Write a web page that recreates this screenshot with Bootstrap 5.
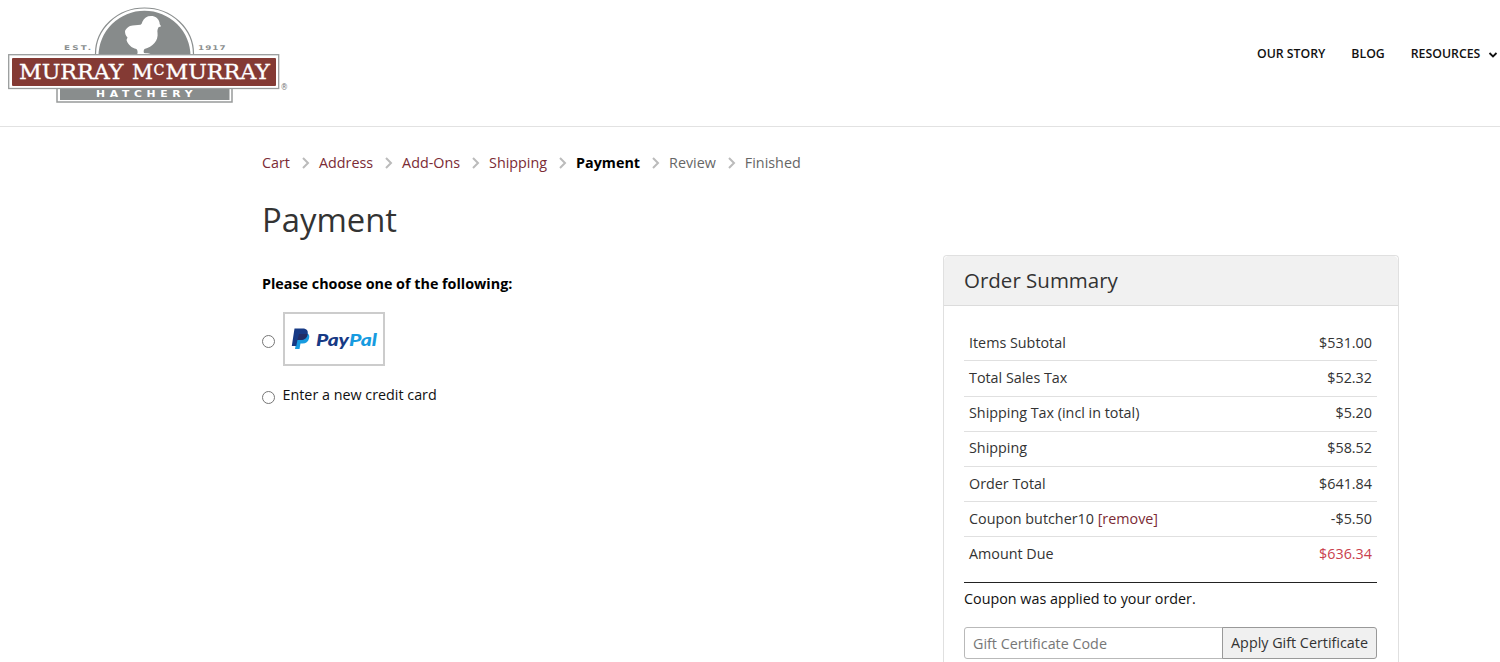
<!DOCTYPE html>
<html lang="en">
<head>
<meta charset="utf-8">
<meta name="viewport" content="width=device-width, initial-scale=1">
<title>Payment - Murray McMurray Hatchery</title>
<link rel="stylesheet" href="https://cdn.jsdelivr.net/npm/bootstrap@5.3.0/dist/css/bootstrap.min.css">
<style>
body{font-family:"Open Sans",sans-serif;font-size:14.33px;line-height:21px;color:#111;background:#fff}
.site-header{height:127px;border-bottom:1px solid #e2e2e2;padding:0 2px 0 8px}
.site-logo{margin-top:7px}
.site-menu{gap:26px;margin-top:43px;font-size:12.3px;font-weight:600;color:#111}
.site-menu a{color:#111;text-decoration:none}
.site-menu svg{margin-left:4.500px}
.checkout{width:1137px;margin-left:262px;padding-top:25px}
.steps{gap:12px;height:21px}
.steps a,.coupon a{color:#7b2b35;text-decoration:none}
.steps strong{color:#000}
.steps .later{color:#666}
.steps svg{margin-right:-3px}
h1{font-size:32.8px;line-height:40px;font-weight:400;color:#333;margin:27px 0 0}
.summary{width:456px;height:407px;margin-top:15px;border-color:#e0e0e0;border-bottom:0;border-radius:4px 4px 0 0}
.summary .card-header{height:50px;background:#f1f1f1;border-color:#dcdcdc;padding:0 20px}
.summary h2{font-size:20.5px;font-weight:400;color:#333;margin:0;line-height:49px}
.summary .card-body{padding:20px 21px 0 20px}
.totals{margin:0;color:#333}
.totals td{padding:6px 5px 7px;border-color:#e0e0e0;color:#333}
.totals tr:nth-child(2) td{padding-bottom:8px}
.totals tr:nth-child(3) td,.totals tr:nth-child(4) td{padding-top:5px;padding-bottom:8px}
.totals tr:last-child td{border:0}
.totals .due{color:#c9404d}
.note{border-top:1px solid #222;padding-top:5px;margin-top:11px}
.gift{margin-top:18px;height:32px}
.gift .form-control{font-size:14.33px;border-color:#b9b9b9;border-radius:3px;padding:1px 8px 0;color:#333}
.gift .form-control::placeholder{color:#777}
.gift .btn{font-size:14.33px;background:#f0f0f0;border:1px solid #999;border-radius:3px;padding:0;width:155px;color:#333}
.prompt{padding-top:33px;font-weight:700;color:#000}
.form-check-input.pick{width:13px;height:13px;border:1px solid #767676;margin:4px 0 0;flex:none}
.method-paypal{margin-top:18px}
.method-card{margin-top:18px}
.method-card span{padding:0 0 1px 7.500px}
.paypal{width:102px;height:54px;border:2px solid #ccc}
</style>
</head>
<body>
<header class="site-header d-flex justify-content-between align-items-start">
  <a href="#" class="site-logo" aria-label="Murray McMurray Hatchery">
    <svg class="d-block" width="282" height="98" viewBox="8 7 282 98">
      <path d="M95.5 56v-2a49 46 0 0 1 98 0v2" fill="#fff" stroke="#8b8f8f" stroke-width="1.2"/>
      <path d="M98.5 56a45.8 45 0 0 1 92 0z" fill="#878b8b"/>
      <path d="M136.500 55c1.500-1.500 1.500-4 0-6-5-1-8.500-4.500-10-9l1-2.500c-2-2-2.500-4-2.500-6.500 1-2 2.500-4 5-5 3.500-.8 7-.5 10.500-1.200 1.500-.8 1.500-2.300 2-3.300 1.500-3.500 4.500-5.500 8.500-5.500 4.500 0 7.500 2.500 8.500 6.500 0 1.500.5 2.500 1.700 3.700l-2.700 1c-1 2-1.300 3.300-1 5.300.5 4-.5 7.500-3 10.500-2.500 3-6 5-10 6-1 1.500-1 2.500-.5 4 2 .3 4.500 0 6.500 1v1z" fill="#fff"/>
      <path d="M57 88v14h175V88" fill="#fff" stroke="#989b9b" stroke-width="1.500"/>
      <rect x="60" y="88" width="169.500" height="12" fill="#898d8d"/>
      <rect x="8.700" y="54.700" width="270" height="33.800" fill="#fff" stroke="#999c9c" stroke-width="1.300"/>
      <rect x="12" y="58" width="264" height="28" rx="1" fill="#843a34"/>
      <g fill="#fff" stroke="#fff" stroke-width=".35" font-family="'DejaVu Serif',serif">
        <text x="19" y="78.800" font-size="20.500" textLength="104.500" lengthAdjust="spacingAndGlyphs">MURRAY</text>
        <text x="132" y="78.800" font-size="20.500" textLength="21" lengthAdjust="spacingAndGlyphs">M</text>
        <text x="153.500" y="74.800" font-size="14" textLength="11" lengthAdjust="spacingAndGlyphs">C</text>
        <text x="165.500" y="78.800" font-size="20.500" textLength="104.500" lengthAdjust="spacingAndGlyphs">MURRAY</text>
      </g>
      <g font-family="'DejaVu Sans',sans-serif" font-weight="700">
        <g fill="#fff" font-size="8"><text transform="translate(96 97) scale(1.350 1)" textLength="71.500" x="0" y="0">HATCHERY</text></g>
        <g fill="#8c9090" font-size="6.500">
          <text transform="translate(64 50) scale(1.350 1)" textLength="20">EST.</text>
          <text transform="translate(198 50) scale(1.350 1)" textLength="20.500">1917</text>
        </g>
      </g>
      <text x="280.500" y="89.500" font-family="'DejaVu Sans',sans-serif" font-size="8.500" fill="#777" textLength="7.500" lengthAdjust="spacingAndGlyphs">®</text>
    </svg>
  </a>
  <nav class="site-menu d-flex">
    <a href="#">OUR STORY</a>
    <a href="#">BLOG</a>
    <a href="#">RESOURCES
      <svg width="10" height="6" viewBox="0 0 10 6"><path d="M1.500 1 5 4.500 8.500 1" fill="none" stroke="#111" stroke-width="1.800"/></svg></a>
  </nav>
</header>

<main class="checkout">
  <nav class="steps d-flex align-items-center" aria-label="Checkout steps">
    <a href="#">Cart</a>
    <svg width="8" height="12" viewBox="0 0 8 12"><path d="m1 1 5 5-5 5" fill="none" stroke="#bbb" stroke-width="2"/></svg>
    <a href="#">Address</a>
    <svg width="8" height="12" viewBox="0 0 8 12"><path d="m1 1 5 5-5 5" fill="none" stroke="#bbb" stroke-width="2"/></svg>
    <a href="#">Add-Ons</a>
    <svg width="8" height="12" viewBox="0 0 8 12"><path d="m1 1 5 5-5 5" fill="none" stroke="#bbb" stroke-width="2"/></svg>
    <a href="#">Shipping</a>
    <svg width="8" height="12" viewBox="0 0 8 12"><path d="m1 1 5 5-5 5" fill="none" stroke="#bbb" stroke-width="2"/></svg>
    <strong>Payment</strong>
    <svg width="8" height="12" viewBox="0 0 8 12"><path d="m1 1 5 5-5 5" fill="none" stroke="#bbb" stroke-width="2"/></svg>
    <span class="later">Review</span>
    <svg width="8" height="12" viewBox="0 0 8 12"><path d="m1 1 5 5-5 5" fill="none" stroke="#bbb" stroke-width="2"/></svg>
    <span class="later">Finished</span>
  </nav>
  <h1>Payment</h1>
  <div class="d-flex justify-content-between align-items-start">
    <form>
      <p class="prompt mb-0">Please choose one of the following:</p>
      <label class="method-paypal d-flex align-items-center gap-2">
        <input class="form-check-input pick" type="radio" name="method">
        <span class="paypal d-flex align-items-center justify-content-center">
          <svg width="98" height="50" viewBox="285 314 98 50">
            <path d="M298 333h7c3.500 0 5 2 4 5.500-.8 3.500-3 5-6.500 5h-2l-1 5.500h-4.500z" fill="#179be0"/>
            <path d="M294.500 328.500h8c4.500 0 6 2.500 5 6-1 4-3.500 5.500-7.500 5.500h-2.500l-1.200 6h-4.500z" fill="#173a85"/>
            <path d="M299 334h8.500c0 3-2.500 6-7 6h-3z" fill="#222d65"/>
            <g font-family="Lato,sans-serif" font-weight="900" font-style="italic" font-size="17.500">
              <text x="316" y="346" fill="#173a85" textLength="33" lengthAdjust="spacingAndGlyphs">Pay</text>
              <text x="349" y="346" fill="#179be0" textLength="28" lengthAdjust="spacingAndGlyphs">Pal</text>
            </g>
          </svg>
        </span>
      </label>
      <label class="method-card d-flex align-items-center">
        <input class="form-check-input pick" type="radio" name="method">
        <span>Enter a new credit card</span>
      </label>
    </form>
    <section class="summary card">
      <div class="card-header"><h2>Order Summary</h2></div>
      <div class="card-body">
        <table class="table totals">
          <tbody>
          <tr><td>Items Subtotal</td><td class="text-end">$531.00</td></tr>
          <tr><td>Total Sales Tax</td><td class="text-end">$52.32</td></tr>
          <tr><td>Shipping Tax (incl in total)</td><td class="text-end">$5.20</td></tr>
          <tr><td>Shipping</td><td class="text-end">$58.52</td></tr>
          <tr><td>Order Total</td><td class="text-end">$641.84</td></tr>
          <tr><td class="coupon">Coupon butcher10 <a href="#">[remove]</a></td><td class="text-end">-$5.50</td></tr>
          <tr><td>Amount Due</td><td class="text-end due">$636.34</td></tr>
          </tbody>
        </table>
        <p class="note mb-0">Coupon was applied to your order.</p>
        <div class="gift input-group">
          <input class="form-control" type="text" placeholder="Gift Certificate Code">
          <button class="btn" type="button">Apply Gift Certificate</button>
        </div>
      </div>
    </section>
  </div>
</main>
<script src="https://cdn.jsdelivr.net/npm/bootstrap@5.3.0/dist/js/bootstrap.bundle.min.js"></script>
</body>
</html>
